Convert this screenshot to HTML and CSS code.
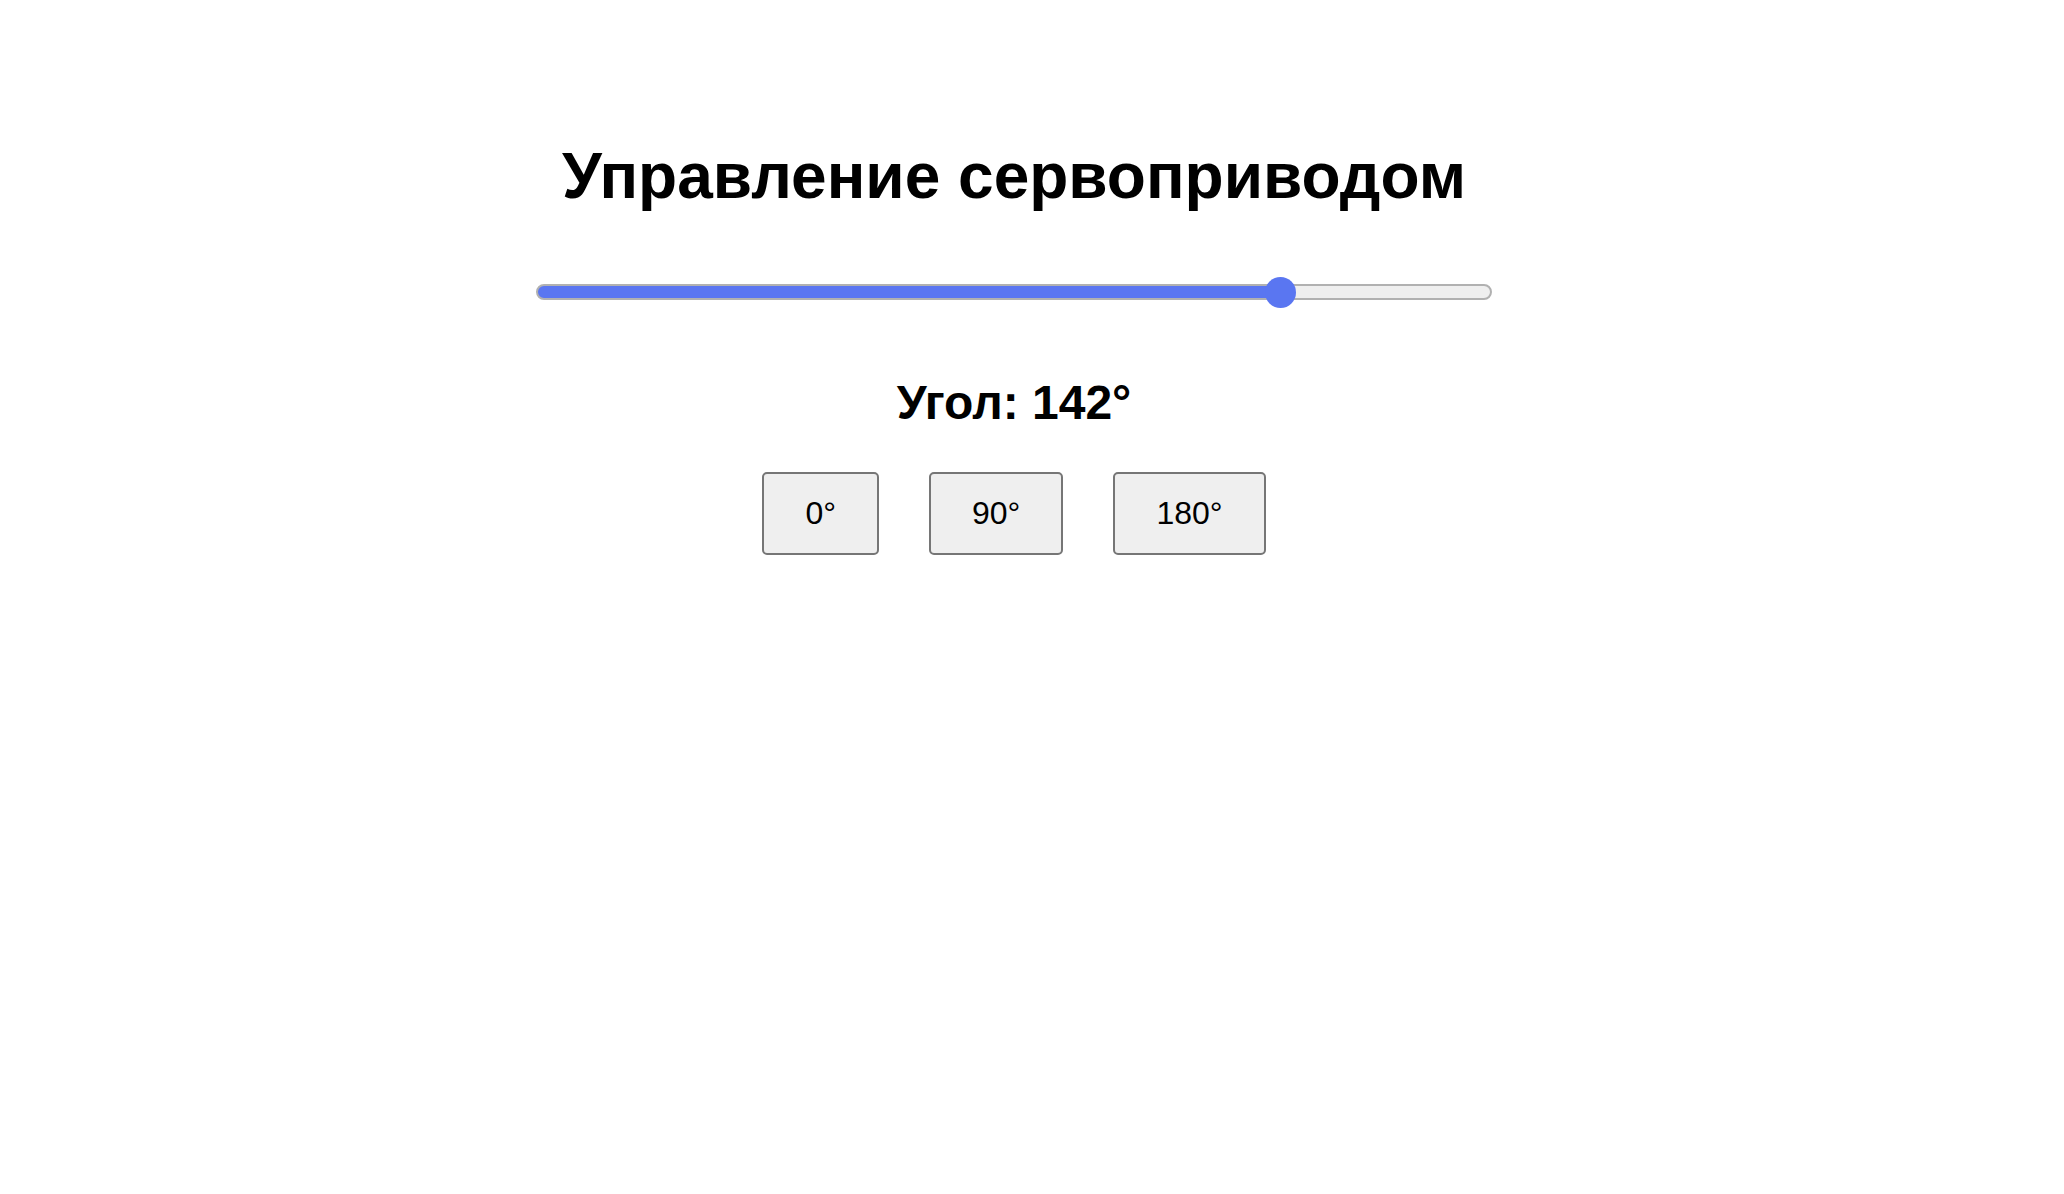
FILE: index.html
```html
<!DOCTYPE html>
<html lang="ru">
<head>
<meta charset="utf-8">
<title>Управление сервоприводом</title>
<link rel="stylesheet" href="styles.css">
</head>
<body>
<main class="page">
  <h1 class="title">Управление сервоприводом</h1>
  <input class="slider" type="range" min="0" max="180" value="142">
  <h2 class="angle">Угол: 142°</h2>
  <div class="presets">
    <button class="preset">0°</button>
    <button class="preset">90°</button>
    <button class="preset">180°</button>
  </div>
</main>
</body>
</html>
```
FILE: styles.css
```css
html, body {
  margin: 0;
  background: #ffffff;
}
body {
  font-family: "Liberation Sans", Arial, sans-serif;
  color: #000;
}
.page {
  padding: 139px 36px 0 0;
  display: flex;
  flex-direction: column;
  align-items: center;
  text-align: center;
}
.title {
  margin: 0 0 63px;
  font-size: 64px;
  font-weight: bold;
  line-height: normal;
}
.slider {
  -webkit-appearance: none;
  appearance: none;
  display: block;
  width: 956px;
  height: 32px;
  margin: 0;
  padding: 0;
  background: transparent;
}
.slider::-webkit-slider-runnable-track {
  height: 16px;
  box-sizing: border-box;
  border-radius: 8px;
  border: 2px solid #b1b1b1;
  background: linear-gradient(to right, #5a76f1 0, #5a76f1 78%, #efefef 78%);
}
.slider::-webkit-slider-thumb {
  -webkit-appearance: none;
  appearance: none;
  width: 31px;
  height: 31px;
  margin-top: -9.5px;
  border-radius: 50%;
  background: #5a76f1;
  border: none;
}
.slider:focus {
  outline: none;
}
.angle {
  margin: 67px 0 42px;
  font-size: 48px;
  font-weight: bold;
  line-height: normal;
}
.presets {
  display: flex;
  gap: 50px;
  justify-content: center;
}
.preset {
  font-family: "Liberation Sans", Arial, sans-serif;
  font-size: 32px;
  line-height: normal;
  color: #000;
  background: #efefef;
  border: 2px solid #767676;
  border-radius: 5px;
  padding: 21px 41px;
  margin: 0;
}
```
